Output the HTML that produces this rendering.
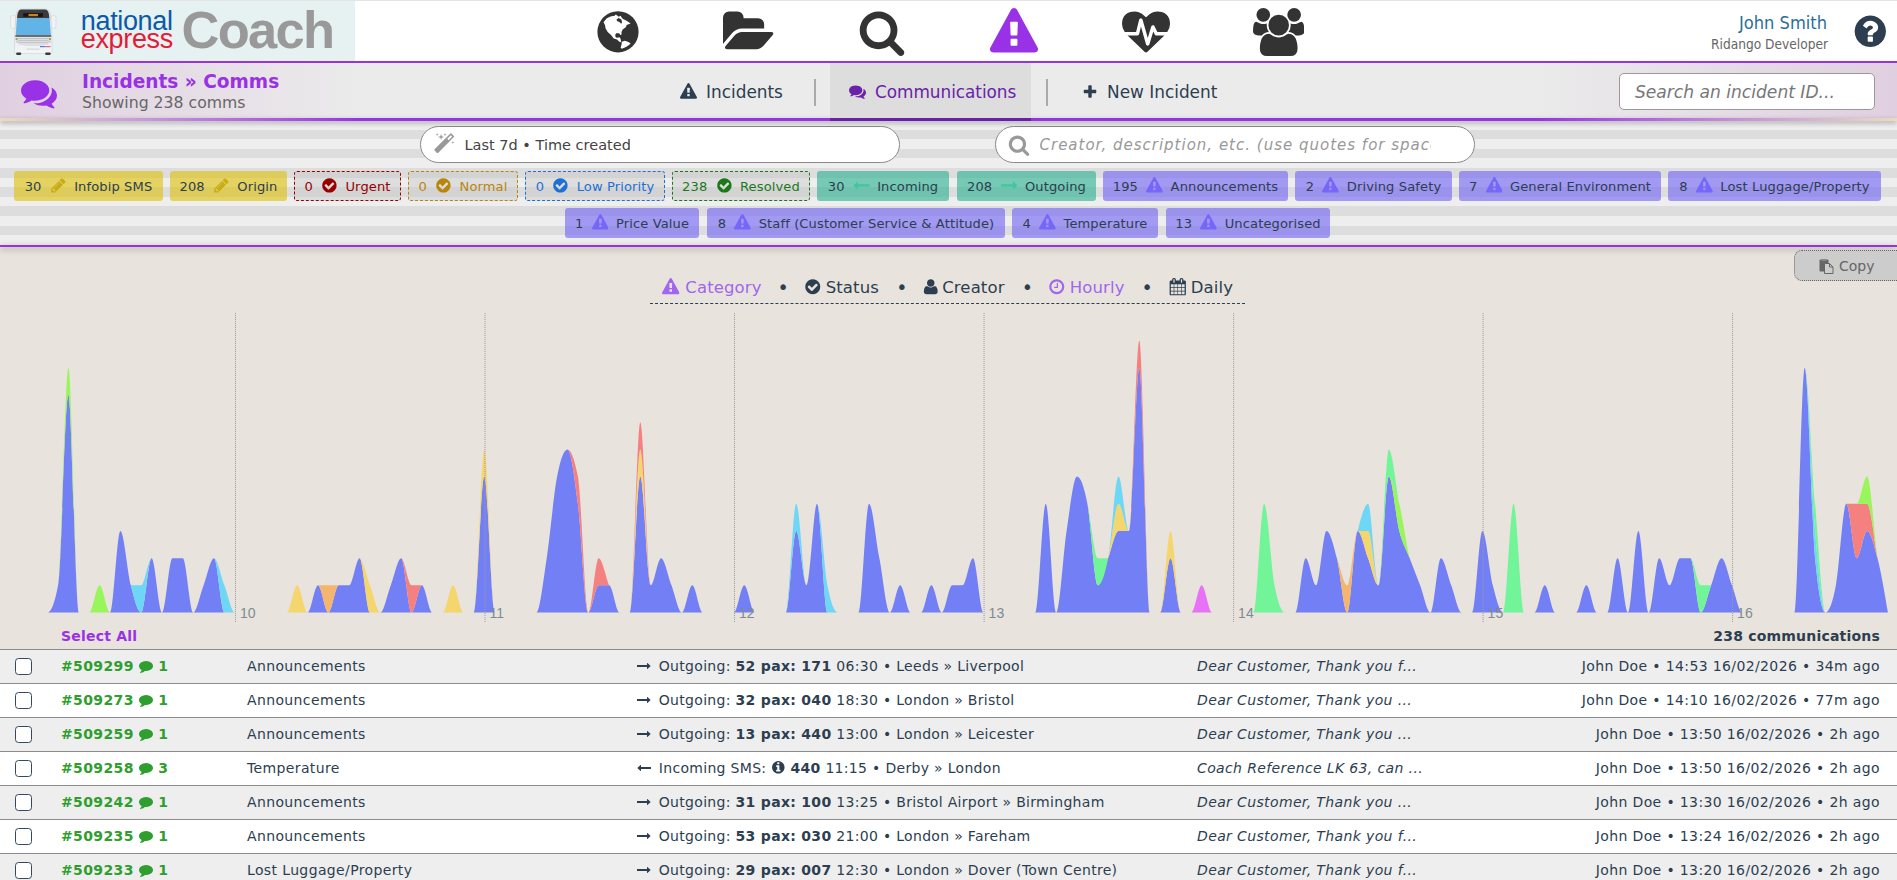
<!DOCTYPE html>
<html lang="en">
<head>
<meta charset="utf-8">
<title>Incidents - Comms</title>
<style>
*{box-sizing:border-box;}
html,body{margin:0;padding:0;}
body{width:1897px;height:880px;overflow:hidden;background:#e8e3dc;font-family:"DejaVu Sans","Liberation Sans",sans-serif;color:#2c3e50;font-size:14px;position:relative;}
svg.ic{fill:currentColor;display:inline-block;}
/* header */
#hdr{position:absolute;left:0;top:0;width:1897px;height:61px;background:#fff;border-top:1px solid #e4e4e4;}
#logo{position:absolute;left:0;top:0;width:355px;height:60px;background:#e6f1f1;}
#coach{position:absolute;left:181.500px;top:-1px;font-family:"Liberation Sans",sans-serif;font-weight:bold;font-size:52.500px;letter-spacing:-1.700px;color:#999;line-height:60px;}
#nat,#exp{position:absolute;left:80.800px;font-family:"Liberation Sans",sans-serif;font-size:27px;line-height:30px;letter-spacing:-.35px;white-space:nowrap;}
#nat{top:5.300px;color:#0a5aa8;}
#exp{top:23.100px;color:#e31b37;}
.navi{position:absolute;top:7px;height:48px;}
#uname{position:absolute;right:70px;top:10.600px;font-size:18.100px;color:#2a6f97;white-space:nowrap;font-family:"DejaVu Sans Condensed","DejaVu Sans",sans-serif;}
#urole{position:absolute;right:69px;top:34.500px;font-size:13.600px;color:#666;white-space:nowrap;font-family:"DejaVu Sans Condensed","DejaVu Sans",sans-serif;}
#help{position:absolute;left:1851.700px;top:11.700px;}
#pline1{position:absolute;left:0;top:61px;width:1897px;height:2px;background:#9932e6;}
/* sub header */
#sub{position:absolute;left:0;top:63px;width:1897px;height:55px;background:linear-gradient(90deg,#e0cfe0 0,#ebebeb 19%,#ebebeb 81%,#e0cfe0 100%);}
#subline{position:absolute;z-index:2;left:0;top:118px;width:1897px;height:3.200px;background:linear-gradient(90deg,#e8dcc0 0,#cfa6d6 6%,#9932e6 19%,#9932e6 81%,#cfa6d6 94%,#e8dcc0 100%);box-shadow:0 2px 5px rgba(0,0,0,.35);}
#cmi{position:absolute;left:21px;top:75.200px;}
#cmi svg{display:block;}
#ttl{position:absolute;left:82px;top:70.600px;font-weight:bold;font-size:18.550px;color:#9932e6;white-space:nowrap;line-height:22px;}
#sttl{position:absolute;left:82px;top:92.600px;font-size:15.7px;color:#666;white-space:nowrap;line-height:20px;}
.tab{position:absolute;top:63px;height:55px;line-height:59px;font-size:16.9px;white-space:nowrap;color:#2c3e50;}
.tab .ti{margin-right:9px;position:relative;top:2px;}
.tab.act{background:#dddddd;border-bottom:3.200px solid #6a1fa8;color:#6a22a8;padding-left:19px;height:58.200px;z-index:3;letter-spacing:-.05px;}
.sep{position:absolute;top:78.500px;width:2px;height:27px;background:#aaa;}
#srch{position:absolute;left:1619px;top:73px;width:256px;height:37px;background:#fff;border:1px solid #999;border-radius:5px;font-style:italic;font-size:17.100px;color:#777;line-height:37px;padding-left:15px;white-space:nowrap;}
/* filter */
#filt{position:absolute;left:0;top:120.300px;width:1897px;height:125px;background:repeating-linear-gradient(180deg,#eeeeee 0,#eeeeee 9.600px,#dddddd 9.600px,#dddddd 19.200px);}
#pline2{position:absolute;left:0;top:244.600px;width:1897px;height:2.600px;background:#9932e6;box-shadow:0 2px 6px rgba(0,0,0,.38);}
.pill{position:absolute;top:126px;height:37px;width:480px;background:#fff;border:1px solid #8a8a8a;border-radius:19px;white-space:nowrap;line-height:37px;font-size:14.5px;}
#ph{position:absolute;left:43.5px;top:0;width:391px;overflow:hidden;color:#999;font-style:italic;letter-spacing:1px;font-size:15px;}
.chip{position:absolute;height:30px;line-height:27px;padding-top:1px;letter-spacing:.12px;font-size:13.050px;border-radius:3px;white-space:nowrap;color:#2c3e50;display:flex;justify-content:center;align-items:center;}
.chip .ci{margin:-3px 7.500px 0 8.300px;}
.c-y{background:rgba(222,194,5,.6);}
.c-y .ci{fill:#c8ac16;}
.c-t{background:rgba(38,176,142,.6);}
.c-t .ci{fill:#3cc79e;}
.c-p{background:rgba(112,96,245,.6);}
.c-p .ci{fill:#7667fa;}
.c-d{border:1px dashed;background:rgba(200,200,200,.45);}
.d-r{color:#990000;border-color:#990000;}
.d-g{color:#b8860b;border-color:#b8860b;}
.d-b{color:#1e6fd6;border-color:#1e6fd6;}
.d-n{color:#1a7a1a;border-color:#1a7a1a;}
/* chart */
#chart{position:absolute;left:0;top:247px;width:1897px;height:375px;}
#ctabs{position:absolute;left:650px;top:275px;width:595px;height:29px;border-bottom:1px dashed #2c3e50;font-size:16.5px;white-space:nowrap;line-height:25.500px;}
#ctabs .ct.on{color:#a066ee;}
#ctabs .ct,#ctabs .dot{position:absolute;top:0;letter-spacing:.12px;}
#ctabs .dot{font-size:19px;line-height:24.500px;}
#ctabs .cti{position:relative;top:2.500px;}
#copy{position:absolute;left:1794px;top:250.200px;width:110px;height:31px;background:#ccc;border:1px dotted #666;border-radius:8px 0 0 8px;font-size:14px;color:#666;line-height:30.500px;padding-left:44px;}
/* table */
#thead{position:absolute;left:0;top:622px;width:1897px;height:27px;font-weight:bold;font-size:14px;letter-spacing:.2px;line-height:29.500px;}
.row{position:absolute;left:0;width:1897px;height:34px;border-top:1px solid #8c8c8c;line-height:33px;font-size:14px;letter-spacing:.37px;white-space:nowrap;}
.row.o{background:#eeeeee;}
.row.e{background:#ffffff;}
.row span{position:absolute;top:0;}
.cb{position:absolute;left:15px;top:8px;width:17.300px;height:16.800px;border:1.500px solid #34495e;border-radius:3.500px;background:#fff;}
.id{left:61px;font-weight:bold;color:#2e9e2e;}
.cat{left:247px;}
.dir{left:637px;letter-spacing:.31px;}
.dsc{left:1197px;font-style:italic;}
.who{right:17px;}
.row svg{position:relative;}
.cm{top:2px;}
.arw{top:2px;margin-right:3px;}
.inf{top:2px;}

</style>
</head>
<body>
<svg width="0" height="0" style="position:absolute"><defs><symbol id="fa-warn" viewBox="0 0 1792 1792"><path d="M1024 1375v-190q0-14-9.500-23.500t-22.500-9.500h-192q-13 0-22.500 9.500t-9.500 23.500v190q0 14 9.500 23.500t22.500 9.500h192q13 0 22.500-9.500t9.500-23.500zM1022 1001l18-459q0-12-10-19-13-11-24-11h-220q-11 0-24 11-10 7-10 21l17 457q0 10 10 16.500t24 6.500h185q14 0 23.500-6.500t10.500-16.500zM1008 67l768 1408q35 63-2 126-17 29-46.500 46t-63.500 17h-1536q-34 0-63.500-17t-46.500-46q-37-63-2-126l768-1408q17-31 47-49t65-18 65 18 47 49z"/></symbol><symbol id="fa-check" viewBox="0 0 1792 1792"><path d="M1412 734q0-28-18-46l-91-90q-19-19-45-19t-45 19l-408 407-226-226q-19-19-45-19t-45 19l-91 90q-18 18-18 46 0 27 18 45l362 362q19 19 45 19 27 0 46-19l543-543q18-18 18-45zM1664 896q0 209-103 385.500t-279.500 279.500-385.500 103-385.500-103-279.500-279.500-103-385.500 103-385.500 279.500-279.500 385.500-103 385.500 103 279.500 279.500 103 385.500z"/></symbol><symbol id="fa-pencil" viewBox="0 0 1792 1792"><path d="M491 1536l91-91-235-235-91 91v107h128v128h107zM1014 608q0-22-22-22-10 0-17 7l-542 542q-7 7-7 17 0 22 22 22 10 0 17-7l542-542q7-7 7-17zM960 416l416 416-832 832h-416v-416zM1643 512q0 53-37 90l-166 166-416-416 166-165q36-38 90-38 53 0 91 38l235 234q37 39 37 91z"/></symbol><symbol id="fa-ar" viewBox="0 0 1792 1792"><path d="M1728 893q0 14-10 24l-384 354q-16 14-35 6-19-9-19-29v-224h-1248q-14 0-23-9t-9-23v-192q0-14 9-23t23-9h1248v-224q0-21 19-29t35 5l384 350q10 10 10 23z"/></symbol><symbol id="fa-al" viewBox="0 0 1792 1792"><path d="M1792 800v192q0 14-9 23t-23 9h-1248v224q0 21-19 29t-35-5l-384-350q-10-10-10-23 0-14 10-24l384-354q16-14 35-6 19 9 19 29v224h1248q14 0 23 9t9 23z"/></symbol><symbol id="fa-comments" viewBox="0 0 1792 1792"><path d="M1408 768q0 139-94 257t-256.500 186.500-353.500 68.500q-86 0-176-16-124 88-278 128-36 9-86 16h-3q-11 0-20.500-8t-11.500-21q-1-3-1-6.500t.5-6.500 2-6l2.500-5 3.500-5.500 4-5 4.500-5 4-4.500q5-6 23-25t26-29.500 22.500-29 25-38.500 20.500-44q-124-72-195-177t-71-224q0-139 94-257t256.500-186.500 353.500-68.500 353.500 68.500 256.500 186.500 94 257zM1792 1024q0 120-71 224.500t-195 176.500q10 24 20.500 44t25 38.500 22.500 29 26 29.500 23 25q1 1 4 4.500t4.500 5 4 5 3.500 5.500l2.500 5 2 6 .5 6.500-1 6.500q-3 14-13 22t-22 7q-50-7-86-16-154-40-278-128-90 16-176 16-271 0-472-132 58 4 88 4 161 0 309-45t264-129q125-92 192-212t67-254q0-77-23-152 129 71 204 178t75 230z"/></symbol><symbol id="fa-comment" viewBox="0 0 1792 1792"><path d="M1792 896q0 174-120 321.500t-326 233-450 85.500q-70 0-145-8-198 175-460 242-49 14-114 22-17 2-30.500-9t-17.500-29v-1q-3-4-.5-12t2-10 4.500-9.500l6-9 7-8.500 8-9q7-8 31-34.500t34.500-38 31-39.500 32.500-51 27-59 26-76q-157-89-247.500-220t-90.500-281q0-130 71-248.500t191-204.500 286-136.500 348-50.500q244 0 450 85.500t326 233 120 321.500z"/></symbol><symbol id="fa-search" viewBox="0 0 1792 1792"><path d="M1216 832q0-185-131.500-316.500t-316.500-131.500-316.500 131.500-131.500 316.500 131.500 316.500 316.500 131.500 316.500-131.500 131.500-316.500zM1728 1664q0 52-38 90t-90 38q-54 0-90-38l-343-342q-179 124-399 124-143 0-273.500-55.500t-225-150-150-225-55.500-273.500 55.500-273.500 150-225 225-150 273.500-55.500 273.500 55.500 225 150 150 225 55.500 273.500q0 220-124 399l343 343q37 37 37 90z"/></symbol><symbol id="fa-plus" viewBox="0 0 1792 1792"><path d="M1600 736v192q0 40-28 68t-68 28h-416v416q0 40-28 68t-68 28h-192q-40 0-68-28t-28-68v-416h-416q-40 0-68-28t-28-68v-192q0-40 28-68t68-28h416v-416q0-40 28-68t68-28h192q40 0 68 28t28 68v416h416q40 0 68 28t28 68z"/></symbol><symbol id="fa-user" viewBox="0 0 1792 1792"><path d="M1600 1405q0 120-73 189.500t-194 69.500h-874q-121 0-194-69.500t-73-189.500q0-53 3.500-103.500t14-109 26.500-108.500 43-97.500 62-81 85.500-53.500 111.500-20q9 0 42 21.500t74.500 48 108 48 133.500 21.500 133.500-21.500 108-48 74.500-48 42-21.500q61 0 111.500 20t85.500 53.500 62 81 43 97.500 26.500 108.500 14 109 3.500 103.500zM1280 512q0 159-112.500 271.500t-271.500 112.500-271.500-112.500-112.500-271.500 112.500-271.500 271.500-112.500 271.500 112.500 112.500 271.500z"/></symbol><symbol id="fa-clock" viewBox="0 0 1792 1792"><path d="M1024 544v448q0 14-9 23t-23 9h-320q-14 0-23-9t-9-23v-64q0-14 9-23t23-9h224v-352q0-14 9-23t23-9h64q14 0 23 9t9 23zM1440 896q0-148-73-273t-198-198-273-73-273 73-198 198-73 273 73 273 198 198 273 73 273-73 198-198 73-273zM1664 896q0 209-103 385.500t-279.500 279.500-385.500 103-385.500-103-279.500-279.500-103-385.500 103-385.500 279.500-279.500 385.500-103 385.500 103 279.500 279.500 103 385.500z"/></symbol><symbol id="fa-question" viewBox="0 0 1792 1792"><path d="M1024 1376v-192q0-14-9-23t-23-9h-192q-14 0-23 9t-9 23v192q0 14 9 23t23 9h192q14 0 23-9t9-23zM1280 704q0-88-55.500-163t-138.500-116-170-41q-243 0-371 213-15 24 8 42l132 100q7 6 19 6 16 0 25-12 53-68 86-92 34-24 86-24 48 0 85.500 26t37.500 59q0 38-20 61t-68 45q-63 28-115.500 86.500t-52.500 125.500v36q0 14 9 23t23 9h192q14 0 23-9t9-23q0-19 21.500-49.500t54.500-49.500q32-18 49-28.500t46-35 44.500-48 28-60.500 12.500-81zM1664 896q0 209-103 385.500t-279.500 279.500-385.500 103-385.500-103-279.500-279.500-103-385.500 103-385.500 279.500-279.500 385.500-103 385.500 103 279.500 279.500 103 385.500z"/></symbol><symbol id="fa-info" viewBox="0 0 1792 1792"><path d="M1152 1376v-160q0-14-9-23t-23-9h-96v-512q0-14-9-23t-23-9h-320q-14 0-23 9t-9 23v160q0 14 9 23t23 9h96v320h-96q-14 0-23 9t-9 23v160q0 14 9 23t23 9h448q14 0 23-9t9-23zM1024 480v-160q0-14-9-23t-23-9h-192q-14 0-23 9t-9 23v160q0 14 9 23t23 9h192q14 0 23-9t9-23zM1664 896q0 209-103 385.500t-279.500 279.500-385.500 103-385.500-103-279.500-279.500-103-385.500 103-385.500 279.500-279.500 385.500-103 385.500 103 279.500 279.500 103 385.500z"/></symbol><symbol id="fa-calendar" viewBox="0 0 1792 1792"><path d="M192 1664h288v-288h-288v288zM544 1664h320v-288h-320v288zM192 1312h288v-320h-288v320zM544 1312h320v-320h-320v320zM192 928h288v-288h-288v288zM928 1664h320v-288h-320v288zM544 928h320v-288h-320v288zM1312 1664h288v-288h-288v288zM928 1312h320v-320h-320v320zM576 448v-288q0-13-9.500-22.500t-22.500-9.500h-64q-13 0-22.500 9.500t-9.500 22.500v288q0 13 9.500 22.500t22.500 9.500h64q13 0 22.500-9.500t9.500-22.500zM1312 1312h288v-320h-288v320zM928 928h320v-288h-320v288zM1312 928h288v-288h-288v288zM1344 448v-288q0-13-9.500-22.500t-22.500-9.500h-64q-13 0-22.500 9.500t-9.500 22.500v288q0 13 9.500 22.500t22.500 9.500h64q13 0 22.500-9.500t9.500-22.500zM1728 384v1280q0 52-38 90t-90 38h-1408q-52 0-90-38t-38-90v-1280q0-52 38-90t90-38h128v-96q0-66 47-113t113-47h64q66 0 113 47t47 113v96h384v-96q0-66 47-113t113-47h64q66 0 113 47t47 113v96h128q52 0 90 38t38 90z"/></symbol><symbol id="fa-folder" viewBox="0 0 1920 1792"><path d="M1879 952q0 31-31 66l-336 396q-43 51-120.500 86.500t-143.500 35.500h-1088q-34 0-60.500-13t-26.500-43q0-31 31-66l336-396q43-51 120.500-86.500t143.500-35.500h1088q34 0 60.500 13t26.500 43zM1536 608v160h-832q-94 0-197 47.500t-164 119.500l-337 396-5 6q0-4-.5-12.500t-.5-12.500v-960q0-92 66-158t158-66h320q92 0 158 66t66 158v32h544q92 0 158 66t66 158z"/></symbol><symbol id="fa-heartbeat" viewBox="0 0 1792 1792"><path d="M1280 1024h305q-5 6-10 10.500t-9 7.500l-3 4-623 600q-18 18-44 18t-44-18l-624-602q-5-2-21-20h369q22 0 39.500-13.500t22.500-34.500l70-281 190 667q6 20 23 33t39 13q21 0 38-13t23-33l146-485 56 112q18 35 57 35zM1792 596q0 145-103 300h-369l-111-221q-8-17-25.500-27t-36.500-8q-45 5-56 46l-129 430-196-686q-6-20-23.500-33t-39.500-12q-22 0-39 13.500t-22 34.500l-116 464h-423q-103-155-103-300 0-220 127-344t351-124q62 0 126.500 21.500t120 58 95.500 68.500 76 68q36-36 76-68t95.500-68.500 120-58 126.500-21.500q224 0 351 124t127 344z"/></symbol><symbol id="fa-users" viewBox="0 0 1920 1792"><path d="M593 896q-162 5-265 128h-134q-82 0-138-40.500t-56-118.500q0-353 124-353 6 0 43.500 21t97.500 42.500 119 21.500q67 0 133-23-5 37-5 66 0 139 81 256zM1664 1533q0 120-73 189.500t-194 69.500h-874q-121 0-194-69.500t-73-189.500q0-53 3.500-103.500t14-109 26.500-108.500 43-97.500 62-81 85.500-53.500 111.500-20q10 0 43 21.500t73 48 107 48 135 21.500 135-21.500 107-48 73-48 43-21.500q61 0 111.500 20t85.500 53.500 62 81 43 97.500 26.500 108.500 14 109 3.500 103.500zM640 256q0 106-75 181t-181 75-181-75-75-181 75-181 181-75 181 75 75 181zM1344 640q0 159-112.500 271.500t-271.500 112.500-271.500-112.500-112.500-271.500 112.500-271.500 271.500-112.500 271.500 112.500 112.500 271.500zM1920 865q0 78-56 118.500t-138 40.500h-134q-103-123-265-128 81-117 81-256 0-29-5-66 66 23 133 23 59 0 119-21.500t97.500-42.500 43.500-21q124 0 124 353zM1792 256q0 106-75 181t-181 75-181-75-75-181 75-181 181-75 181 75 75 181z"/></symbol><symbol id="fa-magic" viewBox="0 0 1792 1792"><path d="M1190 581l293-293-107-107-293 293zM1637 288q0 27-18 45l-1286 1286q-18 18-45 18t-45-18l-198-198q-18-18-18-45t18-45l1286-1286q18-18 45-18t45 18l198 198q18 18 18 45zM286 98l98 30-98 30-30 98-30-98-98-30 98-30 30-98zM636 260l196 60-196 60-60 196-60-196-196-60 196-60 60-196zM1566 738l98 30-98 30-30 98-30-98-98-30 98-30 30-98zM926 98l98 30-98 30-30 98-30-98-98-30 98-30 30-98z"/></symbol><symbol id="fa-files" viewBox="0 0 1792 1792"><path d="M1696 384q40 0 68 28t28 68v1216q0 40-28 68t-68 28h-960q-40 0-68-28t-28-68v-288h-544q-40 0-68-28t-28-68v-672q0-40 20-88t48-76l408-408q28-28 76-48t88-20h416q40 0 68 28t28 68v328q68-40 128-40h416zM1152 597l-299 299h299v-299zM512 213l-299 299h299v-299zM708 860l316-316v-416h-384v416q0 40-28 68t-68 28h-416v640h512v-256q0-40 20-88t48-76zM1664 1664v-1152h-384v416q0 40-28 68t-68 28h-416v640h896z"/></symbol></defs></svg>
<div id="hdr">
  <div id="logo"><svg width="66" height="60" viewBox="0 0 66 60" style="position:absolute;left:0;top:0;">
<defs><linearGradient id="bg1" x1="0" y1="0" x2="0" y2="1"><stop offset="0" stop-color="#dfe1e4"/><stop offset="1" stop-color="#f4f5f7"/></linearGradient></defs>
<rect x="10.600" y="14.500" width="5" height="13" rx="2.200" fill="#f2f2f2" stroke="#d0d4d6" stroke-width=".6"/>
<rect x="51" y="14.500" width="5" height="13" rx="2.200" fill="#f2f2f2" stroke="#d0d4d6" stroke-width=".6"/>
<path d="M14.500 51.500V36l1.200-19.500q.3-8.200 5-8.500h25q4.700.3 5 8.500L52 36v15.500q0 1-1 1H15.500q-1 0-1-1z" fill="url(#bg1)" stroke="#c9ccd0" stroke-width=".5"/>
<path d="M17 17q.4-8.300 4.200-8.500h24q3.800.2 4.200 8.500z" fill="#3b3b3b"/>
<rect x="23.300" y="12.200" width="19.700" height="3.600" fill="#151515"/>
<rect x="28.500" y="13" width="9.500" height="2.200" fill="#c8841a"/>
<path d="M17 16.900h32.600l1.300 17.400H15.700z" fill="#62b4e6"/>
<path d="M15.500 34.200h35.600l.3 1.600H15.200z" fill="#454545"/>
<path d="M17.300 36.200h32l-.8 7.300q-8 1.500-15.200 1.500t-15.200-1.500z" fill="#dcdee1"/><path d="M17.500 37.500h31.500M18 39.500h30.500M18.500 41.500h29.500" stroke="#bfc2c6" stroke-width=".9"/>
<rect x="15.600" y="37" width="2" height="2" fill="#d9962a"/><rect x="49" y="37" width="2" height="2" fill="#d9962a"/>
<rect x="15.800" y="39.600" width="2.200" height="2" fill="#a9d4ee"/><rect x="48.600" y="39.600" width="2.200" height="2" fill="#a9d4ee"/>
<rect x="40" y="45" width="5.500" height="1.200" fill="#4a7fd0"/><rect x="45.500" y="45" width="5" height="1.200" fill="#e26a7c"/>
<rect x="27" y="47.500" width="12.500" height="1.200" fill="#d5d7da"/>
<rect x="16.200" y="51.600" width="5" height="2.300" rx=".8" fill="#3a3a3a"/><rect x="45.200" y="51.600" width="5.500" height="2.300" rx=".8" fill="#3a3a3a"/>
</svg>
<div id="nat">national</div>
<div id="exp">express</div>
<div id="coach">Coach</div>
</div>
  <div class="navi" style="left:593.5px;top:6px;"><svg width="48" height="48" viewBox="0 0 48 48"><circle cx="24" cy="24.8" r="20.6" fill="#333"/><polygon points="9.5,15.2 12.5,11.6 16.4,9.4 20.6,8.8 21.8,7.6 24.8,9.7 26.6,8.8 27.8,10.7 29.0,11.9 32.6,13.7 36.6,16.4 32.6,17.9 32.0,20.0 28.7,22.4 27.5,25.1 27.5,27.5 26.3,28.1 25.1,26.3 22.1,26.3 21.2,28.1 21.8,30.5 23.9,30.8 25.1,29.9 26.6,31.7 27.2,35.3 25.4,34.7 23.0,32.6 19.7,31.4 17.0,28.1 13.7,25.1 11.6,21.5 11.0,17.9" fill="#fff"/><polygon points="22.4,12.8 24.5,11.0 27.2,12.2 28.1,14.9 27.2,16.7 25.4,14.9 23.3,14.3" fill="#333"/><polygon points="27.8,34.7 30.8,33.8 33.8,34.7 36.6,36.3 35.1,38.1 32.0,39.9 27.8,41.7 26.6,40.8 27.5,37.8" fill="#fff"/></svg></div>
  <div class="navi" style="left:723px;"><svg class="ic" width="51.43" height="48.00" style="fill:#333"><use href="#fa-folder"/></svg></div>
  <div class="navi" style="left:857.5px;"><svg class="ic" width="48.00" height="48.00" style="fill:#333"><use href="#fa-search"/></svg></div>
  <div class="navi" style="left:989.5px;"><svg class="ic" width="48.00" height="48.00" style="fill:#9932e6"><use href="#fa-warn"/></svg></div>
  <div class="navi" style="left:1121.5px;"><svg class="ic" width="48.00" height="48.00" style="fill:#333"><use href="#fa-heartbeat"/></svg></div>
  <div class="navi" style="left:1252.5px;"><svg class="ic" width="51.43" height="48.00" style="fill:#333"><use href="#fa-users"/></svg></div>
  <div id="uname">John Smith</div>
  <div id="urole">Ridango Developer</div>
  <div id="help"><svg class="ic" width="36.60" height="36.60" style="fill:#2c3e50"><use href="#fa-question"/></svg></div>
</div>
<div id="pline1"></div>
<div id="sub"></div>
<div id="cmi"><svg class="ic" width="36.00" height="36.00" style="fill:#9932e6"><use href="#fa-comments"/></svg></div>
<div id="ttl">Incidents » Comms</div>
<div id="sttl">Showing 238 comms</div>
<div class="tab" style="left:680px;"><svg class="ic ti" width="17.00" height="17.00" style=""><use href="#fa-warn"/></svg>Incidents</div>
<div class="sep" style="left:814px;"></div>
<div class="tab act" style="left:830px;width:201px;"><svg class="ic ti" width="17.00" height="17.00" style=""><use href="#fa-comments"/></svg>Communications</div>
<div class="sep" style="left:1046px;"></div>
<div class="tab" style="left:1082px;"><svg class="ic ti" width="16.00" height="16.00" style=""><use href="#fa-plus"/></svg>New Incident</div>
<div id="srch">Search an incident ID...</div>
<div id="subline"></div>
<div id="filt"></div>
<div class="pill" style="left:420px;"><svg class="ic" width="22.00" height="22.00" style="fill:#999;position:absolute;left:13px;top:6px;"><use href="#fa-magic"/></svg><span style="position:absolute;left:43.5px;top:0;color:#444;">Last 7d • Time created</span></div>
<div class="pill" style="left:995px;"><svg class="ic" width="22.00" height="22.00" style="fill:#999;position:absolute;left:12px;top:7px;"><use href="#fa-search"/></svg><span id="ph">Creator, description, etc. (use quotes for spaces)</span></div>
<div class="chip c-y" style="left:14px;top:171px;width:149px;"><span class="n">30</span><svg class="ic ci" width="16.80" height="16.80" style=""><use href="#fa-pencil"/></svg><span class="l">Infobip SMS</span></div><div class="chip c-y" style="left:170px;top:171px;width:117px;"><span class="n">208</span><svg class="ic ci" width="16.80" height="16.80" style=""><use href="#fa-pencil"/></svg><span class="l">Origin</span></div><div class="chip c-d d-r" style="left:294px;top:171px;width:107px;"><span class="n">0</span><svg class="ic ci" width="16.80" height="16.80" style=""><use href="#fa-check"/></svg><span class="l">Urgent</span></div><div class="chip c-d d-g" style="left:408px;top:171px;width:110px;"><span class="n">0</span><svg class="ic ci" width="16.80" height="16.80" style=""><use href="#fa-check"/></svg><span class="l">Normal</span></div><div class="chip c-d d-b" style="left:525px;top:171px;width:140px;"><span class="n">0</span><svg class="ic ci" width="16.80" height="16.80" style=""><use href="#fa-check"/></svg><span class="l">Low Priority</span></div><div class="chip c-d d-n" style="left:672px;top:171px;width:138px;"><span class="n">238</span><svg class="ic ci" width="16.80" height="16.80" style=""><use href="#fa-check"/></svg><span class="l">Resolved</span></div><div class="chip c-t" style="left:817px;top:171px;width:132px;"><span class="n">30</span><svg class="ic ci" width="16.80" height="16.80" style=""><use href="#fa-al"/></svg><span class="l">Incoming</span></div><div class="chip c-t" style="left:957px;top:171px;width:139px;"><span class="n">208</span><svg class="ic ci" width="16.80" height="16.80" style=""><use href="#fa-ar"/></svg><span class="l">Outgoing</span></div><div class="chip c-p" style="left:1103px;top:171px;width:185px;"><span class="n">195</span><svg class="ic ci" width="16.80" height="16.80" style=""><use href="#fa-warn"/></svg><span class="l">Announcements</span></div><div class="chip c-p" style="left:1295px;top:171px;width:157px;"><span class="n">2</span><svg class="ic ci" width="16.80" height="16.80" style=""><use href="#fa-warn"/></svg><span class="l">Driving Safety</span></div><div class="chip c-p" style="left:1459px;top:171px;width:202px;"><span class="n">7</span><svg class="ic ci" width="16.80" height="16.80" style=""><use href="#fa-warn"/></svg><span class="l">General Environment</span></div><div class="chip c-p" style="left:1668px;top:171px;width:213px;"><span class="n">8</span><svg class="ic ci" width="16.80" height="16.80" style=""><use href="#fa-warn"/></svg><span class="l">Lost Luggage/Property</span></div><div class="chip c-p" style="left:565px;top:208px;width:134px;"><span class="n">1</span><svg class="ic ci" width="16.80" height="16.80" style=""><use href="#fa-warn"/></svg><span class="l">Price Value</span></div><div class="chip c-p" style="left:707px;top:208px;width:298px;"><span class="n">8</span><svg class="ic ci" width="16.80" height="16.80" style=""><use href="#fa-warn"/></svg><span class="l">Staff (Customer Service &amp; Attitude)</span></div><div class="chip c-p" style="left:1012px;top:208px;width:146px;"><span class="n">4</span><svg class="ic ci" width="16.80" height="16.80" style=""><use href="#fa-warn"/></svg><span class="l">Temperature</span></div><div class="chip c-p" style="left:1166px;top:208px;width:164px;"><span class="n">13</span><svg class="ic ci" width="16.80" height="16.80" style=""><use href="#fa-warn"/></svg><span class="l">Uncategorised</span></div>
<div id="pline2"></div>
<div id="chart"><!--CHART--><svg id="csvg" width="1897" height="375" viewBox="0 0 1897 375" style="position:absolute;left:0;top:0;"><path fill="#727ff5" d="M47.7,365.5C51.1,365.5,54.6,356.4,58.1,338.3C61.5,320.2,65,148.1,68.4,148.1C71.9,148.1,75.4,365.5,78.8,365.5L78.8,365.5C75.4,365.5,71.9,365.5,68.4,365.5C65,365.5,61.5,365.5,58.1,365.5C54.6,365.5,51.1,365.5,47.7,365.5ZM110,365.5C113.5,365.5,117,284,120.4,284C123.9,284,127.4,324.7,130.8,338.3C134.3,351.9,137.8,365.5,141.2,365.5L141.2,365.5C137.8,365.5,134.3,365.5,130.8,365.5C127.4,365.5,123.9,365.5,120.4,365.5C117,365.5,113.5,365.5,110,365.5ZM141.2,365.5C144.7,365.5,148.2,311.2,151.6,311.2C155.1,311.2,158.6,365.5,162,365.5L162,365.5C158.6,365.5,155.1,365.5,151.6,365.5C148.2,365.5,144.7,365.5,141.2,365.5ZM162,365.5C165.5,365.5,169,311.2,172.4,311.2C175.9,311.2,179.3,311.2,182.8,311.2C186.3,311.2,189.7,365.5,193.2,365.5L193.2,365.5C189.7,365.5,186.3,365.5,182.8,365.5C179.3,365.5,175.9,365.5,172.4,365.5C169,365.5,165.5,365.5,162,365.5ZM193.2,365.5C196.7,365.5,200.1,347.4,203.6,338.3C207.1,329.3,210.5,311.2,214,311.2C217.5,311.2,220.9,365.5,224.4,365.5L224.4,365.5C220.9,365.5,217.5,365.5,214,365.5C210.5,365.5,207.1,365.5,203.6,365.5C200.1,365.5,196.7,365.5,193.2,365.5ZM307.6,365.5C311,365.5,314.5,338.3,318,338.3C321.4,338.3,324.9,365.5,328.4,365.5L328.4,365.5C324.9,365.5,321.4,365.5,318,365.5C314.5,365.5,311,365.5,307.6,365.5ZM328.4,365.5C331.8,365.5,335.3,338.3,338.8,338.3C342.2,338.3,345.7,338.3,349.2,338.3C352.6,338.3,356.1,311.2,359.6,311.2C363,311.2,366.5,365.5,370,365.5L370,365.5C366.5,365.5,363,365.5,359.6,365.5C356.1,365.5,352.6,365.5,349.2,365.5C345.7,365.5,342.2,365.5,338.8,365.5C335.3,365.5,331.8,365.5,328.4,365.5ZM380.4,365.5C383.8,365.5,387.3,347.4,390.8,338.3C394.2,329.3,397.7,311.2,401.2,311.2C404.6,311.2,408.1,365.5,411.5,365.5L411.5,365.5C408.1,365.5,404.6,365.5,401.2,365.5C397.7,365.5,394.2,365.5,390.8,365.5C387.3,365.5,383.8,365.5,380.4,365.5ZM411.5,365.5C415,365.5,418.5,338.3,421.9,338.3C425.4,338.3,428.9,365.5,432.3,365.5L432.3,365.5C428.9,365.5,425.4,365.5,421.9,365.5C418.5,365.5,415,365.5,411.5,365.5ZM473.9,365.5C477.4,365.5,480.9,229.6,484.3,229.6C487.8,229.6,491.3,365.5,494.7,365.5L494.7,365.5C491.3,365.5,487.8,365.5,484.3,365.5C480.9,365.5,477.4,365.5,473.9,365.5ZM536.3,365.5C539.8,365.5,543.2,333.8,546.7,311.2C550.2,288.5,553.6,247.8,557.1,229.6C560.6,211.5,564,202.5,567.5,202.5C571,202.5,574.4,229.6,577.9,256.8C581.4,284,584.8,365.5,588.3,365.5L588.3,365.5C584.8,365.5,581.4,365.5,577.9,365.5C574.4,365.5,571,365.5,567.5,365.5C564,365.5,560.6,365.5,557.1,365.5C553.6,365.5,550.2,365.5,546.7,365.5C543.2,365.5,539.8,365.5,536.3,365.5ZM588.3,365.5C591.8,365.5,595.2,338.3,598.7,338.3C602.2,338.3,605.6,338.3,609.1,338.3C612.6,338.3,616,365.5,619.5,365.5L619.5,365.5C616,365.5,612.6,365.5,609.1,365.5C605.6,365.5,602.2,365.5,598.7,365.5C595.2,365.5,591.8,365.5,588.3,365.5ZM629.9,365.5C633.4,365.5,636.8,229.6,640.3,229.6C643.7,229.6,647.2,338.3,650.7,338.3C654.1,338.3,657.6,311.2,661.1,311.2C664.5,311.2,668,329.3,671.5,338.3C674.9,347.4,678.4,365.5,681.9,365.5L681.9,365.5C678.4,365.5,674.9,365.5,671.5,365.5C668,365.5,664.5,365.5,661.1,365.5C657.6,365.5,654.1,365.5,650.7,365.5C647.2,365.5,643.7,365.5,640.3,365.5C636.8,365.5,633.4,365.5,629.9,365.5ZM681.9,365.5C685.3,365.5,688.8,338.3,692.3,338.3C695.7,338.3,699.2,365.5,702.7,365.5L702.7,365.5C699.2,365.5,695.7,365.5,692.3,365.5C688.8,365.5,685.3,365.5,681.9,365.5ZM733.9,365.5C737.3,365.5,740.8,338.3,744.3,338.3C747.7,338.3,751.2,365.5,754.7,365.5L754.7,365.5C751.2,365.5,747.7,365.5,744.3,365.5C740.8,365.5,737.3,365.5,733.9,365.5ZM785.8,365.5C789.3,365.5,792.8,284,796.2,284C799.7,284,803.2,338.3,806.6,338.3C810.1,338.3,813.6,256.8,817,256.8C820.5,256.8,824,365.5,827.4,365.5L827.4,365.5C824,365.5,820.5,365.5,817,365.5C813.6,365.5,810.1,365.5,806.6,365.5C803.2,365.5,799.7,365.5,796.2,365.5C792.8,365.5,789.3,365.5,785.8,365.5ZM858.6,365.5C862.1,365.5,865.6,256.8,869,256.8C872.5,256.8,875.9,293,879.4,311.2C882.9,329.3,886.3,365.5,889.8,365.5L889.8,365.5C886.3,365.5,882.9,365.5,879.4,365.5C875.9,365.5,872.5,365.5,869,365.5C865.6,365.5,862.1,365.5,858.6,365.5ZM889.8,365.5C893.3,365.5,896.7,338.3,900.2,338.3C903.7,338.3,907.1,365.5,910.6,365.5L910.6,365.5C907.1,365.5,903.7,365.5,900.2,365.5C896.7,365.5,893.3,365.5,889.8,365.5ZM921,365.5C924.5,365.5,927.9,338.3,931.4,338.3C934.9,338.3,938.3,365.5,941.8,365.5L941.8,365.5C938.3,365.5,934.9,365.5,931.4,365.5C927.9,365.5,924.5,365.5,921,365.5ZM941.8,365.5C945.3,365.5,948.7,338.3,952.2,338.3C955.7,338.3,959.1,338.3,962.6,338.3C966.1,338.3,969.5,311.2,973,311.2C976.5,311.2,979.9,365.5,983.4,365.5L983.4,365.5C979.9,365.5,976.5,365.5,973,365.5C969.5,365.5,966.1,365.5,962.6,365.5C959.1,365.5,955.7,365.5,952.2,365.5C948.7,365.5,945.3,365.5,941.8,365.5ZM1035.4,365.5C1038.8,365.5,1042.3,256.8,1045.8,256.8C1049.2,256.8,1052.7,365.5,1056.2,365.5L1056.2,365.5C1052.7,365.5,1049.2,365.5,1045.8,365.5C1042.3,365.5,1038.8,365.5,1035.4,365.5ZM1056.2,365.5C1059.6,365.5,1063.1,306.6,1066.6,284C1070,261.3,1073.5,229.6,1077,229.6C1080.4,229.6,1083.9,238.7,1087.4,256.8C1090.8,274.9,1094.3,338.3,1097.8,338.3C1101.2,338.3,1104.7,320.2,1108.1,311.2C1111.6,302.1,1115.1,284,1118.5,284C1122,284,1125.5,284,1128.9,284C1132.4,284,1135.9,121,1139.3,121C1142.8,121,1146.3,365.5,1149.7,365.5L1149.7,365.5C1146.3,365.5,1142.8,365.5,1139.3,365.5C1135.9,365.5,1132.4,365.5,1128.9,365.5C1125.5,365.5,1122,365.5,1118.5,365.5C1115.1,365.5,1111.6,365.5,1108.1,365.5C1104.7,365.5,1101.2,365.5,1097.8,365.5C1094.3,365.5,1090.8,365.5,1087.4,365.5C1083.9,365.5,1080.4,365.5,1077,365.5C1073.5,365.5,1070,365.5,1066.6,365.5C1063.1,365.5,1059.6,365.5,1056.2,365.5ZM1160.1,365.5C1163.6,365.5,1167.1,311.2,1170.5,311.2C1174,311.2,1177.5,365.5,1180.9,365.5L1180.9,365.5C1177.5,365.5,1174,365.5,1170.5,365.5C1167.1,365.5,1163.6,365.5,1160.1,365.5ZM1295.3,365.5C1298.8,365.5,1302.2,311.2,1305.7,311.2C1309.2,311.2,1312.6,338.3,1316.1,338.3C1319.6,338.3,1323,284,1326.5,284C1330,284,1333.4,297.6,1336.9,311.2C1340.3,324.7,1343.8,365.5,1347.3,365.5L1347.3,365.5C1343.8,365.5,1340.3,365.5,1336.9,365.5C1333.4,365.5,1330,365.5,1326.5,365.5C1323,365.5,1319.6,365.5,1316.1,365.5C1312.6,365.5,1309.2,365.5,1305.7,365.5C1302.2,365.5,1298.8,365.5,1295.3,365.5ZM1347.3,365.5C1350.7,365.5,1354.2,284,1357.7,284C1361.1,284,1364.6,302.1,1368.1,311.2C1371.5,320.2,1375,338.3,1378.5,338.3C1381.9,338.3,1385.4,229.6,1388.9,229.6C1392.3,229.6,1395.8,270.4,1399.3,284C1402.7,297.6,1406.2,302.1,1409.7,311.2C1413.1,320.2,1416.6,329.3,1420.1,338.3C1423.5,347.4,1427,365.5,1430.5,365.5L1430.5,365.5C1427,365.5,1423.5,365.5,1420.1,365.5C1416.6,365.5,1413.1,365.5,1409.7,365.5C1406.2,365.5,1402.7,365.5,1399.3,365.5C1395.8,365.5,1392.3,365.5,1388.9,365.5C1385.4,365.5,1381.9,365.5,1378.5,365.5C1375,365.5,1371.5,365.5,1368.1,365.5C1364.6,365.5,1361.1,365.5,1357.7,365.5C1354.2,365.5,1350.7,365.5,1347.3,365.5ZM1430.5,365.5C1433.9,365.5,1437.4,311.2,1440.9,311.2C1444.3,311.2,1447.8,329.3,1451.2,338.3C1454.7,347.4,1458.2,365.5,1461.6,365.5L1461.6,365.5C1458.2,365.5,1454.7,365.5,1451.2,365.5C1447.8,365.5,1444.3,365.5,1440.9,365.5C1437.4,365.5,1433.9,365.5,1430.5,365.5ZM1472,365.5C1475.5,365.5,1479,284,1482.4,284C1485.9,284,1489.4,324.7,1492.8,338.3C1496.3,351.9,1499.8,365.5,1503.2,365.5L1503.2,365.5C1499.8,365.5,1496.3,365.5,1492.8,365.5C1489.4,365.5,1485.9,365.5,1482.4,365.5C1479,365.5,1475.5,365.5,1472,365.5ZM1534.4,365.5C1537.9,365.5,1541.4,338.3,1544.8,338.3C1548.3,338.3,1551.8,365.5,1555.2,365.5L1555.2,365.5C1551.8,365.5,1548.3,365.5,1544.8,365.5C1541.4,365.5,1537.9,365.5,1534.4,365.5ZM1576,365.5C1579.5,365.5,1582.9,338.3,1586.4,338.3C1589.9,338.3,1593.3,365.5,1596.8,365.5L1596.8,365.5C1593.3,365.5,1589.9,365.5,1586.4,365.5C1582.9,365.5,1579.5,365.5,1576,365.5ZM1607.2,365.5C1610.7,365.5,1614.1,311.2,1617.6,311.2C1621.1,311.2,1624.5,365.5,1628,365.5L1628,365.5C1624.5,365.5,1621.1,365.5,1617.6,365.5C1614.1,365.5,1610.7,365.5,1607.2,365.5ZM1628,365.5C1631.5,365.5,1634.9,284,1638.4,284C1641.9,284,1645.3,365.5,1648.8,365.5L1648.8,365.5C1645.3,365.5,1641.9,365.5,1638.4,365.5C1634.9,365.5,1631.5,365.5,1628,365.5ZM1648.8,365.5C1652.3,365.5,1655.7,311.2,1659.2,311.2C1662.7,311.2,1666.1,338.3,1669.6,338.3C1673.1,338.3,1676.5,311.2,1680,311.2C1683.4,311.2,1686.9,311.2,1690.4,311.2C1693.8,311.2,1697.3,365.5,1700.8,365.5L1700.8,365.5C1697.3,365.5,1693.8,365.5,1690.4,365.5C1686.9,365.5,1683.4,365.5,1680,365.5C1676.5,365.5,1673.1,365.5,1669.6,365.5C1666.1,365.5,1662.7,365.5,1659.2,365.5C1655.7,365.5,1652.3,365.5,1648.8,365.5ZM1700.8,365.5C1704.2,365.5,1707.7,347.4,1711.2,338.3C1714.6,329.3,1718.1,311.2,1721.6,311.2C1725,311.2,1728.5,329.3,1732,338.3C1735.4,347.4,1738.9,365.5,1742.4,365.5L1742.4,365.5C1738.9,365.5,1735.4,365.5,1732,365.5C1728.5,365.5,1725,365.5,1721.6,365.5C1718.1,365.5,1714.6,365.5,1711.2,365.5C1707.7,365.5,1704.2,365.5,1700.8,365.5ZM1794.3,365.5C1797.8,365.5,1801.3,121,1804.7,121C1808.2,121,1811.7,274.9,1815.1,311.2C1818.6,347.4,1822.1,365.5,1825.5,365.5L1825.5,365.5C1822.1,365.5,1818.6,365.5,1815.1,365.5C1811.7,365.5,1808.2,365.5,1804.7,365.5C1801.3,365.5,1797.8,365.5,1794.3,365.5ZM1825.5,365.5C1829,365.5,1832.5,356.4,1835.9,338.3C1839.4,320.2,1842.9,256.8,1846.3,256.8C1849.8,256.8,1853.3,311.2,1856.7,311.2C1860.2,311.2,1863.7,284,1867.1,284C1870.6,284,1874.1,297.6,1877.5,311.2C1881,324.7,1884.5,345.1,1887.9,365.5L1887.9,365.5C1884.5,365.5,1881,365.5,1877.5,365.5C1874.1,365.5,1870.6,365.5,1867.1,365.5C1863.7,365.5,1860.2,365.5,1856.7,365.5C1853.3,365.5,1849.8,365.5,1846.3,365.5C1842.9,365.5,1839.4,365.5,1835.9,365.5C1832.5,365.5,1829,365.5,1825.5,365.5Z"/><path fill="#f5b56e" d="M318,338.3C321.4,338.3,324.9,338.3,328.4,338.3C331.8,338.3,335.3,338.3,338.8,338.3L338.8,338.3C335.3,338.3,331.8,365.5,328.4,365.5C324.9,365.5,321.4,338.3,318,338.3ZM1336.9,311.2C1340.3,320.2,1343.8,338.3,1347.3,338.3C1350.7,338.3,1354.2,284,1357.7,284L1357.7,284C1354.2,284,1350.7,365.5,1347.3,365.5C1343.8,365.5,1340.3,324.7,1336.9,311.2Z"/><path fill="#f5d56e" d="M286.8,365.5C290.3,365.5,293.7,338.3,297.2,338.3C300.6,338.3,304.1,365.5,307.6,365.5L307.6,365.5C304.1,365.5,300.6,365.5,297.2,365.5C293.7,365.5,290.3,365.5,286.8,365.5ZM359.6,311.2C363,311.2,366.5,329.3,370,338.3C373.4,347.4,376.9,365.5,380.4,365.5L380.4,365.5C376.9,365.5,373.4,365.5,370,365.5C366.5,365.5,363,311.2,359.6,311.2ZM442.7,365.5C446.2,365.5,449.7,338.3,453.1,338.3C456.6,338.3,460.1,365.5,463.5,365.5L463.5,365.5C460.1,365.5,456.6,365.5,453.1,365.5C449.7,365.5,446.2,365.5,442.7,365.5ZM473.9,365.5C477.4,365.5,480.9,202.5,484.3,202.5C487.8,202.5,491.3,365.5,494.7,365.5L494.7,365.5C491.3,365.5,487.8,229.6,484.3,229.6C480.9,229.6,477.4,365.5,473.9,365.5ZM629.9,365.5C633.4,365.5,636.8,202.5,640.3,202.5C643.7,202.5,647.2,338.3,650.7,338.3L650.7,338.3C647.2,338.3,643.7,229.6,640.3,229.6C636.8,229.6,633.4,365.5,629.9,365.5ZM1108.1,311.2C1111.6,297.6,1115.1,256.8,1118.5,256.8C1122,256.8,1125.5,284,1128.9,284L1128.9,284C1125.5,284,1122,284,1118.5,284C1115.1,284,1111.6,302.1,1108.1,311.2ZM1160.1,365.5C1163.6,365.5,1167.1,284,1170.5,284C1174,284,1177.5,365.5,1180.9,365.5L1180.9,365.5C1177.5,365.5,1174,311.2,1170.5,311.2C1167.1,311.2,1163.6,365.5,1160.1,365.5ZM1357.7,284C1361.1,284,1364.6,284,1368.1,284C1371.5,284,1375,338.3,1378.5,338.3L1378.5,338.3C1375,338.3,1371.5,320.2,1368.1,311.2C1364.6,302.1,1361.1,284,1357.7,284Z"/><path fill="#6ed7f5" d="M130.8,338.3C134.3,338.3,137.8,338.3,141.2,338.3C144.7,338.3,148.2,311.2,151.6,311.2L151.6,311.2C148.2,311.2,144.7,365.5,141.2,365.5C137.8,365.5,134.3,351.9,130.8,338.3ZM214,311.2C217.5,311.2,220.9,329.3,224.4,338.3C227.9,347.4,231.3,365.5,234.8,365.5L234.8,365.5C231.3,365.5,227.9,365.5,224.4,365.5C220.9,365.5,217.5,311.2,214,311.2ZM785.8,365.5C789.3,365.5,792.8,256.8,796.2,256.8C799.7,256.8,803.2,338.3,806.6,338.3L806.6,338.3C803.2,338.3,799.7,284,796.2,284C792.8,284,789.3,365.5,785.8,365.5ZM817,256.8C820.5,256.8,824,320.2,827.4,338.3C830.9,356.4,834.4,365.5,837.8,365.5L837.8,365.5C834.4,365.5,830.9,365.5,827.4,365.5C824,365.5,820.5,256.8,817,256.8ZM1108.1,311.2C1111.6,293,1115.1,229.6,1118.5,229.6C1122,229.6,1125.5,284,1128.9,284L1128.9,284C1125.5,284,1122,256.8,1118.5,256.8C1115.1,256.8,1111.6,297.6,1108.1,311.2ZM1357.7,284C1361.1,270.4,1364.6,256.8,1368.1,256.8C1371.5,256.8,1375,338.3,1378.5,338.3L1378.5,338.3C1375,338.3,1371.5,284,1368.1,284C1364.6,284,1361.1,284,1357.7,284ZM1804.7,121C1808.2,121,1811.7,243.2,1815.1,284C1818.6,324.7,1822.1,365.5,1825.5,365.5L1825.5,365.5C1822.1,365.5,1818.6,347.4,1815.1,311.2C1811.7,274.9,1808.2,121,1804.7,121Z"/><path fill="#e872f5" d="M1191.3,365.5C1194.8,365.5,1198.3,338.3,1201.7,338.3C1205.2,338.3,1208.7,365.5,1212.1,365.5L1212.1,365.5C1208.7,365.5,1205.2,365.5,1201.7,365.5C1198.3,365.5,1194.8,365.5,1191.3,365.5Z"/><path fill="#f58080" d="M401.2,311.2C404.6,311.2,408.1,338.3,411.5,338.3C415,338.3,418.5,338.3,421.9,338.3L421.9,338.3C418.5,338.3,415,365.5,411.5,365.5C408.1,365.5,404.6,311.2,401.2,311.2ZM567.5,202.5C571,202.5,574.4,211.5,577.9,229.6C581.4,247.8,584.8,365.5,588.3,365.5L588.3,365.5C584.8,365.5,581.4,284,577.9,256.8C574.4,229.6,571,202.5,567.5,202.5ZM588.3,365.5C591.8,365.5,595.2,311.2,598.7,311.2C602.2,311.2,605.6,329.3,609.1,338.3L609.1,338.3C605.6,338.3,602.2,338.3,598.7,338.3C595.2,338.3,591.8,365.5,588.3,365.5ZM629.9,365.5C633.4,365.5,636.8,175.3,640.3,175.3C643.7,175.3,647.2,338.3,650.7,338.3L650.7,338.3C647.2,338.3,643.7,202.5,640.3,202.5C636.8,202.5,633.4,365.5,629.9,365.5ZM1128.9,284C1132.4,284,1135.9,93.8,1139.3,93.8C1142.8,93.8,1146.3,365.5,1149.7,365.5L1149.7,365.5C1146.3,365.5,1142.8,121,1139.3,121C1135.9,121,1132.4,284,1128.9,284ZM1846.3,256.8C1849.8,256.8,1853.3,256.8,1856.7,256.8C1860.2,256.8,1863.7,256.8,1867.1,256.8C1870.6,256.8,1874.1,293,1877.5,311.2L1877.5,311.2C1874.1,297.6,1870.6,284,1867.1,284C1863.7,284,1860.2,311.2,1856.7,311.2C1853.3,311.2,1849.8,256.8,1846.3,256.8Z"/><path fill="#98f55a" d="M58.1,338.3C61.5,320.2,65,121,68.4,121C71.9,121,75.4,365.5,78.8,365.5L78.8,365.5C75.4,365.5,71.9,148.1,68.4,148.1C65,148.1,61.5,320.2,58.1,338.3ZM89.2,365.5C92.7,365.5,96.2,338.3,99.6,338.3C103.1,338.3,106.6,365.5,110,365.5L110,365.5C106.6,365.5,103.1,365.5,99.6,365.5C96.2,365.5,92.7,365.5,89.2,365.5ZM1388.9,229.6C1392.3,229.6,1395.8,243.2,1399.3,256.8C1402.7,270.4,1406.2,297.6,1409.7,311.2L1409.7,311.2C1406.2,302.1,1402.7,297.6,1399.3,284C1395.8,270.4,1392.3,229.6,1388.9,229.6ZM1856.7,256.8C1860.2,256.8,1863.7,229.6,1867.1,229.6C1870.6,229.6,1874.1,288.5,1877.5,311.2L1877.5,311.2C1874.1,293,1870.6,256.8,1867.1,256.8C1863.7,256.8,1860.2,256.8,1856.7,256.8Z"/><path fill="#72f598" d="M1087.4,256.8C1090.8,270.4,1094.3,311.2,1097.8,311.2C1101.2,311.2,1104.7,311.2,1108.1,311.2L1108.1,311.2C1104.7,329.3,1101.2,338.3,1097.8,338.3C1094.3,338.3,1090.8,274.9,1087.4,256.8ZM1253.7,365.5C1257.2,365.5,1260.6,256.8,1264.1,256.8C1267.6,256.8,1271,320.2,1274.5,338.3C1278,356.4,1281.4,365.5,1284.9,365.5L1284.9,365.5C1281.4,365.5,1278,365.5,1274.5,365.5C1271,365.5,1267.6,365.5,1264.1,365.5C1260.6,365.5,1257.2,365.5,1253.7,365.5ZM1378.5,338.3C1381.9,338.3,1385.4,202.5,1388.9,202.5C1392.3,202.5,1395.8,238.7,1399.3,256.8L1399.3,256.8C1395.8,243.2,1392.3,229.6,1388.9,229.6C1385.4,229.6,1381.9,338.3,1378.5,338.3ZM1503.2,365.5C1506.7,365.5,1510.2,256.8,1513.6,256.8C1517.1,256.8,1520.6,365.5,1524,365.5L1524,365.5C1520.6,365.5,1517.1,365.5,1513.6,365.5C1510.2,365.5,1506.7,365.5,1503.2,365.5ZM1690.4,311.2C1693.8,311.2,1697.3,338.3,1700.8,338.3C1704.2,338.3,1707.7,338.3,1711.2,338.3L1711.2,338.3C1707.7,347.4,1704.2,365.5,1700.8,365.5C1697.3,365.5,1693.8,311.2,1690.4,311.2ZM1804.7,121C1808.2,121,1811.7,216.1,1815.1,256.8C1818.6,297.6,1822.1,365.5,1825.5,365.5L1825.5,365.5C1822.1,365.5,1818.6,324.7,1815.1,284C1811.7,243.2,1808.2,121,1804.7,121Z"/><line x1="235.5" y1="66" x2="235.5" y2="375" stroke="#979da1" stroke-width="1" stroke-dasharray="1,1"/><text x="240.0" y="371" font-family="Liberation Sans, sans-serif" font-size="14" fill="#7f8b92">10</text><line x1="485.0" y1="66" x2="485.0" y2="375" stroke="#979da1" stroke-width="1" stroke-dasharray="1,1"/><text x="489.5" y="371" font-family="Liberation Sans, sans-serif" font-size="14" fill="#7f8b92">11</text><line x1="734.5" y1="66" x2="734.5" y2="375" stroke="#979da1" stroke-width="1" stroke-dasharray="1,1"/><text x="739.0" y="371" font-family="Liberation Sans, sans-serif" font-size="14" fill="#7f8b92">12</text><line x1="984.1" y1="66" x2="984.1" y2="375" stroke="#979da1" stroke-width="1" stroke-dasharray="1,1"/><text x="988.6" y="371" font-family="Liberation Sans, sans-serif" font-size="14" fill="#7f8b92">13</text><line x1="1233.6" y1="66" x2="1233.6" y2="375" stroke="#979da1" stroke-width="1" stroke-dasharray="1,1"/><text x="1238.1" y="371" font-family="Liberation Sans, sans-serif" font-size="14" fill="#7f8b92">14</text><line x1="1483.1" y1="66" x2="1483.1" y2="375" stroke="#979da1" stroke-width="1" stroke-dasharray="1,1"/><text x="1487.6" y="371" font-family="Liberation Sans, sans-serif" font-size="14" fill="#7f8b92">15</text><line x1="1732.6" y1="66" x2="1732.6" y2="375" stroke="#979da1" stroke-width="1" stroke-dasharray="1,1"/><text x="1737.1" y="371" font-family="Liberation Sans, sans-serif" font-size="14" fill="#7f8b92">16</text></svg><!--/CHART--></div>
<div id="ctabs"><span class="ct on" style="left:12.00px;"><svg class="ic cti" width="17.50" height="17.50" style="margin-right:5.80px;"><use href="#fa-warn"/></svg>Category</span><span class="dot" style="left:127.60px;">•</span><span class="ct" style="left:154.00px;"><svg class="ic cti" width="17.50" height="17.50" style="margin-right:4.20px;"><use href="#fa-check"/></svg>Status</span><span class="dot" style="left:246.30px;">•</span><span class="ct" style="left:272.20px;"><svg class="ic cti" width="17.50" height="17.50" style="margin-right:2.50px;"><use href="#fa-user"/></svg>Creator</span><span class="dot" style="left:371.70px;">•</span><span class="ct on" style="left:397.75px;"><svg class="ic cti" width="17.50" height="17.50" style="margin-right:4.50px;"><use href="#fa-clock"/></svg>Hourly</span><span class="dot" style="left:491.60px;">•</span><span class="ct" style="left:518.80px;"><svg class="ic cti" width="17.50" height="17.50" style="margin-right:4.40px;"><use href="#fa-calendar"/></svg>Daily</span></div>
<div id="copy"><svg width="15" height="15" viewBox="0 0 15 15" style="position:absolute;left:24px;top:7.500px;"><rect x="0.5" y="0.5" width="9" height="12" rx="1" fill="#666"/><rect x="2.5" y="0" width="5" height="2" fill="#888"/><path d="M5.5 4.5h5l3.5 3.5v6.500h-8.500z" fill="#ccc" stroke="#666" stroke-width="1"/><path d="M10.500 4.500v3.500h3.500" fill="none" stroke="#666" stroke-width="1"/></svg>Copy</div>
<div id="thead"><span style="position:absolute;left:61px;color:#9932e6;">Select All</span><span style="position:absolute;right:17px;">238 communications</span></div>
<div class="row o" style="top:649px;"><i class="cb"></i><span class="id">#509299 <svg class="ic cm" width="14.00" height="14.00" style=""><use href="#fa-comment"/></svg> 1</span><span class="cat">Announcements</span><span class="dir"><svg class="ic arw" width="14.00" height="14.00" style=""><use href="#fa-ar"/></svg> Outgoing: <b>52 pax: 171</b> 06:30 • Leeds » Liverpool</span><span class="dsc">Dear Customer, Thank you f...</span><span class="who">John Doe • 14:53 16/02/2026 • 34m ago</span></div>
<div class="row e" style="top:683px;"><i class="cb"></i><span class="id">#509273 <svg class="ic cm" width="14.00" height="14.00" style=""><use href="#fa-comment"/></svg> 1</span><span class="cat">Announcements</span><span class="dir"><svg class="ic arw" width="14.00" height="14.00" style=""><use href="#fa-ar"/></svg> Outgoing: <b>32 pax: 040</b> 18:30 • London » Bristol</span><span class="dsc">Dear Customer, Thank you ...</span><span class="who">John Doe • 14:10 16/02/2026 • 77m ago</span></div>
<div class="row o" style="top:717px;"><i class="cb"></i><span class="id">#509259 <svg class="ic cm" width="14.00" height="14.00" style=""><use href="#fa-comment"/></svg> 1</span><span class="cat">Announcements</span><span class="dir"><svg class="ic arw" width="14.00" height="14.00" style=""><use href="#fa-ar"/></svg> Outgoing: <b>13 pax: 440</b> 13:00 • London » Leicester</span><span class="dsc">Dear Customer, Thank you ...</span><span class="who">John Doe • 13:50 16/02/2026 • 2h ago</span></div>
<div class="row e" style="top:751px;"><i class="cb"></i><span class="id">#509258 <svg class="ic cm" width="14.00" height="14.00" style=""><use href="#fa-comment"/></svg> 3</span><span class="cat">Temperature</span><span class="dir"><svg class="ic arw" width="14.00" height="14.00" style=""><use href="#fa-al"/></svg> Incoming SMS: <svg class="ic inf" width="14.60" height="14.60" style=""><use href="#fa-info"/></svg> <b>440</b> 11:15 • Derby » London</span><span class="dsc">Coach Reference LK 63, can ...</span><span class="who">John Doe • 13:50 16/02/2026 • 2h ago</span></div>
<div class="row o" style="top:785px;"><i class="cb"></i><span class="id">#509242 <svg class="ic cm" width="14.00" height="14.00" style=""><use href="#fa-comment"/></svg> 1</span><span class="cat">Announcements</span><span class="dir"><svg class="ic arw" width="14.00" height="14.00" style=""><use href="#fa-ar"/></svg> Outgoing: <b>31 pax: 100</b> 13:25 • Bristol Airport » Birmingham</span><span class="dsc">Dear Customer, Thank you ...</span><span class="who">John Doe • 13:30 16/02/2026 • 2h ago</span></div>
<div class="row e" style="top:819px;"><i class="cb"></i><span class="id">#509235 <svg class="ic cm" width="14.00" height="14.00" style=""><use href="#fa-comment"/></svg> 1</span><span class="cat">Announcements</span><span class="dir"><svg class="ic arw" width="14.00" height="14.00" style=""><use href="#fa-ar"/></svg> Outgoing: <b>53 pax: 030</b> 21:00 • London » Fareham</span><span class="dsc">Dear Customer, Thank you f...</span><span class="who">John Doe • 13:24 16/02/2026 • 2h ago</span></div>
<div class="row o" style="top:853px;"><i class="cb"></i><span class="id">#509233 <svg class="ic cm" width="14.00" height="14.00" style=""><use href="#fa-comment"/></svg> 1</span><span class="cat">Lost Luggage/Property</span><span class="dir"><svg class="ic arw" width="14.00" height="14.00" style=""><use href="#fa-ar"/></svg> Outgoing: <b>29 pax: 007</b> 12:30 • London » Dover (Town Centre)</span><span class="dsc">Dear Customer, Thank you f...</span><span class="who">John Doe • 13:20 16/02/2026 • 2h ago</span></div>

</body>
</html>
